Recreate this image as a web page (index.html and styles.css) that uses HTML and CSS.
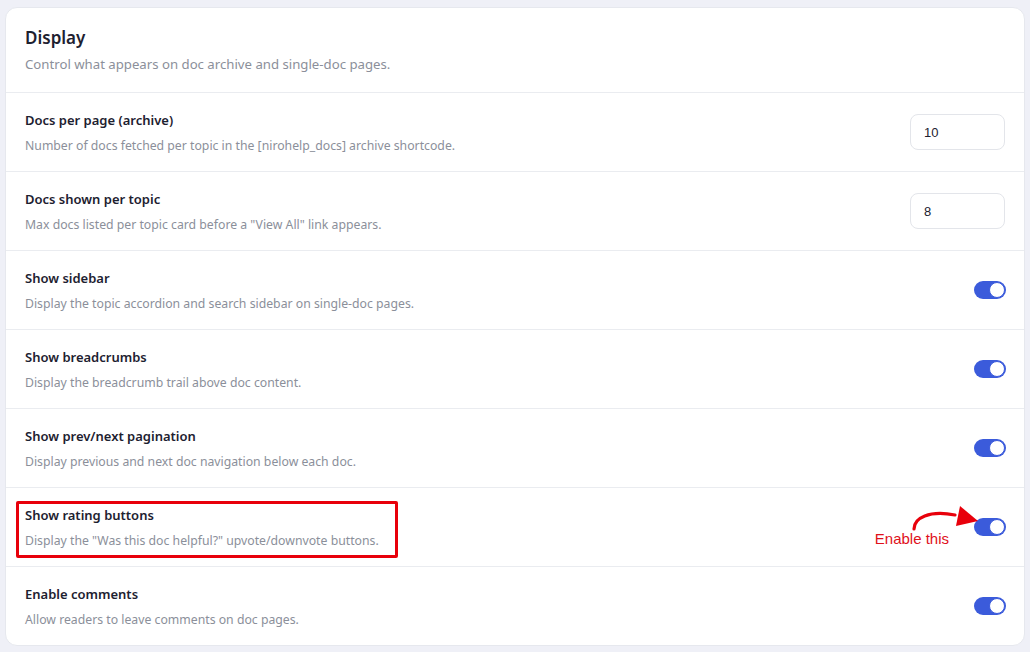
FILE: index.html
```html
<!DOCTYPE html>
<html>
<head>
<meta charset="utf-8">
<link rel="stylesheet" href="styles.css">
</head>
<body>
<div class="card">
  <div class="header">
    <h2 class="title">Display</h2>
    <p class="subtitle">Control what appears on doc archive and single-doc pages.</p>
  </div>
  <div class="row">
    <div class="text">
      <div class="label">Docs per page (archive)</div>
      <div class="desc">Number of docs fetched per topic in the [nirohelp_docs] archive shortcode.</div>
    </div>
    <div class="input">10</div>
  </div>
  <div class="row">
    <div class="text">
      <div class="label">Docs shown per topic</div>
      <div class="desc">Max docs listed per topic card before a "View All" link appears.</div>
    </div>
    <div class="input">8</div>
  </div>
  <div class="row">
    <div class="text">
      <div class="label">Show sidebar</div>
      <div class="desc">Display the topic accordion and search sidebar on single-doc pages.</div>
    </div>
    <div class="toggle"><span class="knob"></span></div>
  </div>
  <div class="row">
    <div class="text">
      <div class="label">Show breadcrumbs</div>
      <div class="desc">Display the breadcrumb trail above doc content.</div>
    </div>
    <div class="toggle"><span class="knob"></span></div>
  </div>
  <div class="row">
    <div class="text">
      <div class="label">Show prev/next pagination</div>
      <div class="desc">Display previous and next doc navigation below each doc.</div>
    </div>
    <div class="toggle"><span class="knob"></span></div>
  </div>
  <div class="row highlight-row">
    <div class="text">
      <div class="label">Show rating buttons</div>
      <div class="desc">Display the "Was this doc helpful?" upvote/downvote buttons.</div>
    </div>
    <div class="right-group">
      <span class="note">Enable this</span>
      <div class="toggle"><span class="knob"></span></div>
    </div>
    <div class="redbox"></div>
    <svg class="arrow" width="70" height="30" viewBox="0 0 70 30">
      <path d="M3 25 C 3 14, 18 6, 44 11" fill="none" stroke="#e8000b" stroke-width="3.2" stroke-linecap="round"/>
      <polygon points="49,2 67,17 45,22" fill="#e8000b"/>
    </svg>
  </div>
  <div class="row">
    <div class="text">
      <div class="label">Enable comments</div>
      <div class="desc">Allow readers to leave comments on doc pages.</div>
    </div>
    <div class="toggle"><span class="knob"></span></div>
  </div>
</div>
</body>
</html>
```

FILE: styles.css
```css
* { box-sizing: border-box; }
html, body { margin: 0; padding: 0; }
body {
  background: #eff0f7;
  font-family: "Noto Sans", "Open Sans", sans-serif;
  width: 1030px;
  height: 652px;
  padding: 7px 5px 7px 5px;
}
.card {
  background: #ffffff;
  border: 1px solid #e6e8ee;
  border-radius: 12px;
  height: 639px;
  display: flex;
  flex-direction: column;
  overflow: hidden;
}
.header {
  height: 84px;
  flex: none;
  padding: 19px 19px 0 19px;
}
.title {
  margin: 0;
  font-size: 17px;
  font-weight: 600;
  color: #1d2130;
  line-height: 22px;
}
.subtitle {
  margin: 6px 0 0 0;
  font-size: 13.2px;
  color: #8b8f9a;
  line-height: 18px;
}
.row {
  position: relative;
  height: 79px;
  flex: none;
  border-top: 1px solid #eaecf0;
  display: flex;
  align-items: center;
  justify-content: space-between;
  padding: 0 18px 0 19px;
}
.text {
  display: flex;
  flex-direction: column;
  gap: 9px;
  margin-top: 2px;
}
.label {
  font-size: 13px;
  font-weight: 600;
  color: #1d2130;
  line-height: 17px;
}
.desc {
  font-size: 12.25px;
  color: #8b8f9a;
  line-height: 16px;
}
.input {
  width: 95px;
  height: 36px;
  margin-right: 1px;
  border: 1px solid #e3e5ea;
  border-radius: 8px;
  font-family: "Liberation Sans", Arial, sans-serif;
  font-size: 13px;
  color: #1d2130;
  display: flex;
  align-items: center;
  padding-left: 13px;
}
.toggle {
  position: relative;
  width: 32px;
  height: 18px;
  border-radius: 9px;
  background: #3b5bdb;
}
.knob {
  position: absolute;
  right: 1px;
  top: 1px;
  width: 16px;
  height: 16px;
  border-radius: 50%;
  background: #fff;
  border: 1.5px solid #3b5bdb;
}
.right-group {
  display: flex;
  align-items: center;
}
.note {
  font-family: "Liberation Sans", Arial, sans-serif;
  font-size: 15px;
  color: #e0101a;
  margin-right: 25px;
  margin-top: 22px;
}
.redbox {
  position: absolute;
  left: 10px;
  top: 13px;
  width: 382px;
  height: 57px;
  border: 3px solid #e8000b;
  border-radius: 2px;
}
.arrow {
  position: absolute;
  left: 905px;
  top: 16px;
}
```
